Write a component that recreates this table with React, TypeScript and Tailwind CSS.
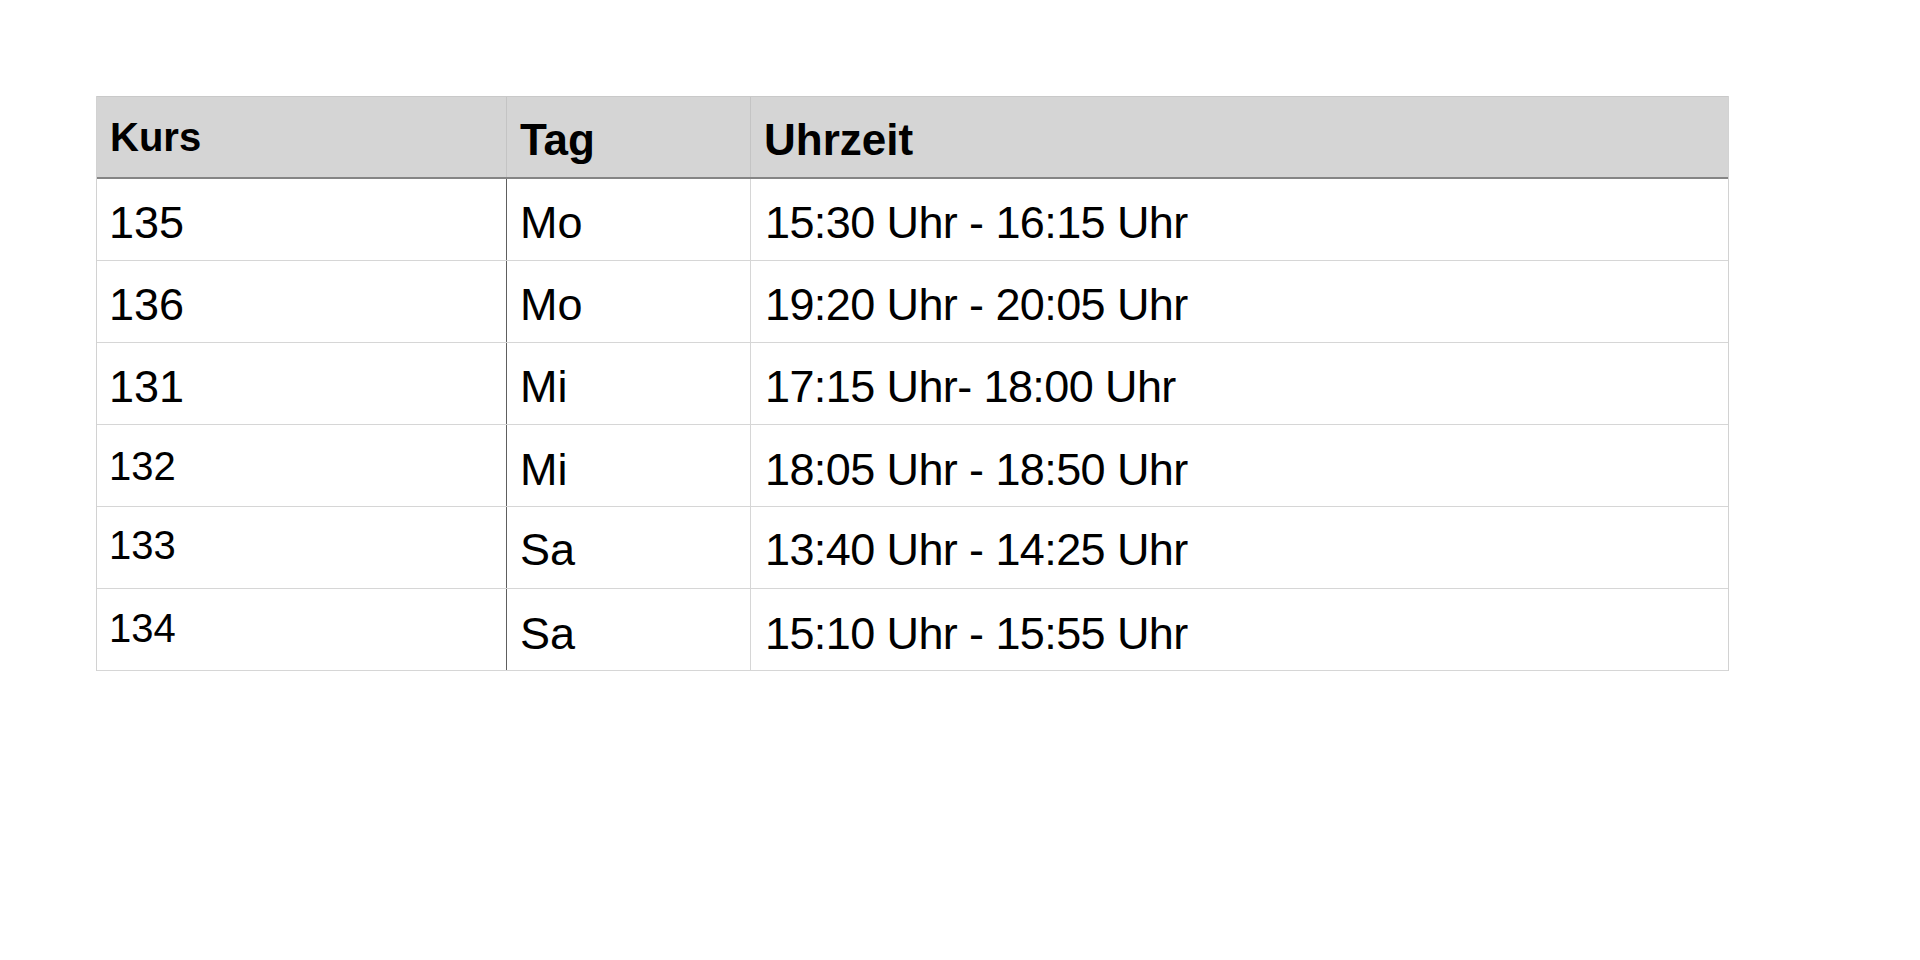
import React from "react";

type Row = { kurs: string; tag: string; zeit: string; small?: boolean; kPad: string; tPad: string };

const rows: Row[] = [
  { kurs: "135", tag: "Mo", zeit: "15:30 Uhr - 16:15 Uhr", kPad: "pt-[21px]", tPad: "pt-[21px]" },
  { kurs: "136", tag: "Mo", zeit: "19:20 Uhr - 20:05 Uhr", kPad: "pt-[21px]", tPad: "pt-[21px]" },
  { kurs: "131", tag: "Mi", zeit: "17:15 Uhr- 18:00 Uhr", kPad: "pt-[21px]", tPad: "pt-[21px]" },
  { kurs: "132", tag: "Mi", zeit: "18:05 Uhr - 18:50 Uhr", small: true, kPad: "pt-[21px]", tPad: "pt-[22px]" },
  { kurs: "133", tag: "Sa", zeit: "13:40 Uhr - 14:25 Uhr", small: true, kPad: "pt-[18px]", tPad: "pt-[20px]" },
  { kurs: "134", tag: "Sa", zeit: "15:10 Uhr - 15:55 Uhr", small: true, kPad: "pt-[19px]", tPad: "pt-[22px]" },
];

export default function App() {
  return (
    <div
      className="w-[1920px] h-[960px] bg-white text-black pt-[96px] pl-[96px]"
      style={{ fontFamily: '"Liberation Sans", Arial, Helvetica, sans-serif' }}
    >
      <div className="w-[1633px] border-l border-r border-[#d2d2d2]">
        {/* header */}
        <div className="flex h-[83px] bg-[#d5d5d5] border-t border-b-2 border-t-[#c9c9c9] border-b-[#858585]">
          <div className="w-[410px] border-r border-[#c4c4c4] pl-[13px] pt-[20px] text-[40px] leading-none font-bold">
            Kurs
          </div>
          <div className="w-[244px] border-r border-[#c4c4c4] pl-[13px] pt-[21px] text-[44px] leading-none font-bold">
            Tag
          </div>
          <div className="flex-1 pl-[13px] pt-[21px] text-[44px] leading-none font-bold">Uhrzeit</div>
        </div>
        {rows.map((r) => (
          <div key={r.kurs} className="flex h-[82px] border-b border-[#d6d6d6]">
            <div
              className={`w-[410px] border-r border-[#5e5e5e] pl-[12px] leading-none ${r.kPad} ${
                r.small ? "text-[40px]" : "text-[45px]"
              }`}
            >
              {r.kurs}
            </div>
            <div className={`w-[244px] border-r border-[#d6d6d6] pl-[13px] text-[45px] leading-none ${r.tPad}`}>
              {r.tag}
            </div>
            <div className={`flex-1 pl-[14px] text-[45px] leading-none tracking-[-0.6px] ${r.tPad}`}>{r.zeit}</div>
          </div>
        ))}
      </div>
    </div>
  );
}
